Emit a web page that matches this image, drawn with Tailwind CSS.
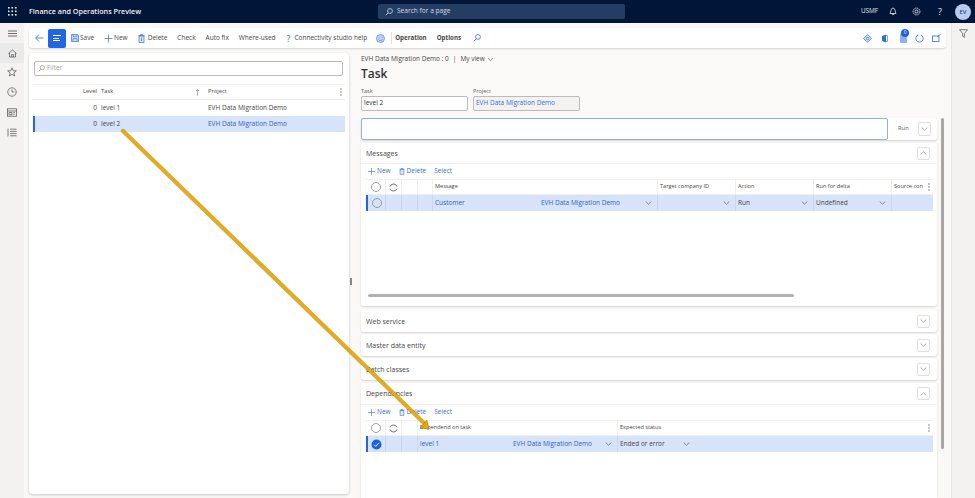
<!DOCTYPE html>
<html>
<head>
<meta charset="utf-8">
<script src="https://cdn.jsdelivr.net/npm/@tailwindcss/browser@4"></script>
</head>
<body class="m-0">
<div class="relative w-[975px] h-[498px] overflow-hidden flex flex-col bg-[#faf9f8] text-[#323130] font-['Open_Sans','Noto_Sans',sans-serif] text-[6.5px] leading-none">

  <!-- top bar -->
  <header class="h-[23px] shrink-0 bg-[#001537] text-white flex items-center relative">
    <div class="w-[24px] flex justify-center">
      <svg width="9" height="9" viewBox="0 0 9 9" fill="#e8edf5"><rect x="0" y="0" width="1.6" height="1.6"/><rect x="3.5" y="0" width="1.6" height="1.6"/><rect x="7" y="0" width="1.6" height="1.6"/><rect x="0" y="3.5" width="1.6" height="1.6"/><rect x="3.5" y="3.5" width="1.6" height="1.6"/><rect x="7" y="3.5" width="1.6" height="1.6"/><rect x="0" y="7" width="1.6" height="1.6"/><rect x="3.5" y="7" width="1.6" height="1.6"/><rect x="7" y="7" width="1.6" height="1.6"/></svg>
    </div>
    <span class="ml-[5px] text-[7.2px] font-semibold whitespace-nowrap text-[#eef1f6]">Finance and Operations Preview</span>
    <div class="absolute left-[378px] top-[4px] w-[247px] h-[15px] rounded-[2px] bg-[#243d63] flex items-center pl-[7px] gap-[4px]">
      <svg width="8" height="8" viewBox="0 0 8 8" fill="none" stroke="#d5dce8" stroke-width=".8"><circle cx="5" cy="3" r="2.4"/><path d="M3.2 4.8 L.8 7.2"/></svg>
      <span class="text-[6.6px] text-[#d5dce8]">Search for a page</span>
    </div>
    <div class="ml-auto flex items-center text-[#e8edf5]">
      <span class="text-[6.4px] mr-[11px]">USMF</span>
      <svg class="mr-[15px]" width="8" height="9" viewBox="0 0 8 9" fill="none" stroke="#e8edf5" stroke-width=".8"><path d="M1 6.5 C2 5.5 1.5 1 4 1 C6.5 1 6 5.5 7 6.5 Z"/><path d="M3 7.5 H5"/></svg>
      <svg class="mr-[17px]" width="9" height="9" viewBox="0 0 9 9" fill="none" stroke="#e8edf5" stroke-width=".9"><circle cx="4.5" cy="4.5" r="1.5"/><circle cx="4.5" cy="4.5" r="3.4" stroke-dasharray="1.4 .6"/></svg>
      <span class="text-[9px] mr-[13px]">?</span>
      <div class="w-[16px] h-[16px] rounded-full bg-[#b6cbf0] text-[#33486e] text-[6px] font-semibold flex items-center justify-center mr-[4px]">EV</div>
    </div>
  </header>

  <div class="flex-1 flex min-h-0">
    <!-- left nav -->
    <nav class="w-[24px] shrink-0 bg-[#f3f2f1] flex flex-col items-center pt-[7px]">
      <svg class="mb-[6px]" width="9" height="7" viewBox="0 0 9 7" stroke="#605e5c" stroke-width=".9"><path d="M0 1H9M0 3.5H9M0 6H9"/></svg>
      <div class="w-[24px] h-[20px] bg-[#eaeaea] flex items-center justify-center">
        <svg width="9" height="9" viewBox="0 0 9 9" fill="none" stroke="#605e5c" stroke-width=".8"><path d="M.5 4.5 L4.5 1 L8.5 4.5M1.5 4 V8 H7.5 V4M3.6 8 V5.5 H5.4 V8"/></svg>
      </div>
      <svg class="mt-[4px]" width="10" height="10" viewBox="0 0 10 10" fill="none" stroke="#605e5c" stroke-width=".8"><path d="M5 .8 L6.2 3.7 L9.3 3.9 L6.9 5.9 L7.7 9 L5 7.3 L2.3 9 L3.1 5.9 L.7 3.9 L3.8 3.7 Z"/></svg>
      <svg class="mt-[10px]" width="10" height="10" viewBox="0 0 10 10" fill="none" stroke="#605e5c" stroke-width=".8"><circle cx="5" cy="5" r="4.2"/><path d="M5 2.5 V5 H7.2"/></svg>
      <svg class="mt-[11px]" width="10" height="9" viewBox="0 0 10 9" fill="none" stroke="#605e5c" stroke-width=".8"><rect x=".5" y=".8" width="9" height="7.4"/><path d="M.5 3H9.5M2 4.6H5V6.8H2ZM6.4 4.6H8M6.4 6.2H8" /></svg>
      <svg class="mt-[11px]" width="10" height="9" viewBox="0 0 10 9" fill="none" stroke="#605e5c" stroke-width=".8"><path d="M1 .5V8.5M3 1.2H9.5M3 3.4H9.5M3 5.6H9.5M3 7.8H9.5"/></svg>
    </nav>

    <!-- main -->
    <main class="flex-1 min-w-0 flex flex-col pl-[5px] pt-[5px]">
      <!-- toolbar -->
      <div class="w-[917px] h-[20px] shrink-0 bg-white rounded-[3px] shadow-[0_1px_2px_rgba(0,0,0,.15)] flex items-center text-[#484644] whitespace-nowrap">
        <svg class="ml-[6px]" width="9" height="8" viewBox="0 0 9 8" fill="none" stroke="#2f6fdc" stroke-width=".8"><path d="M4 .5 L.7 4 L4 7.5M.7 4H8.6"/></svg>
        <div class="ml-[4px] w-[18px] h-[19px] bg-[#2266e3] rounded-[2px] flex flex-col justify-center gap-[1.5px] pl-[5px]">
          <i class="block w-[8px] h-px bg-white"></i><i class="block w-[6px] h-px bg-white"></i><i class="block w-[7px] h-px bg-white"></i>
        </div>
        <svg class="ml-[5px]" width="8" height="8" viewBox="0 0 8 8" fill="#dbe6f8" stroke="#2f6fdc" stroke-width=".7"><path d="M.5 .5H6.5L7.5 1.5V7.5H.5Z"/><path d="M2 .5V2.6H6V.5M2 7.5V4.6H6V7.5" fill="none"/></svg>
        <span class="ml-[1px]">Save</span>
        <svg class="ml-[10px]" width="9" height="9" viewBox="0 0 9 9" stroke="#2f6fdc" stroke-width=".7"><path d="M4.5 .5V8.5M.5 4.5H8.5"/></svg>
        <span class="ml-[1px]">New</span>
        <svg class="ml-[10px]" width="7" height="9" viewBox="0 0 7 9" fill="#dbe6f8" stroke="#2f6fdc" stroke-width=".7"><path d="M1 2V8.5H6V2ZM.3 1.5H6.7M2.5 1.5V.5H4.5V1.5M3.5 3.5V7"/></svg>
        <span class="ml-[3px]">Delete</span>
        <span class="ml-[10px]">Check</span>
        <span class="ml-[10px]">Auto fix</span>
        <span class="ml-[10px]">Where-used</span>
        <span class="ml-[11px] text-[9px] text-[#2f6fdc] leading-none">?</span>
        <span class="ml-[4px]">Connectivity studio help</span>
        <svg class="ml-[9px]" width="9" height="9" viewBox="0 0 9 9" fill="#c4d7f6" stroke="#2f6fdc" stroke-width=".6"><circle cx="4.5" cy="4.5" r="4"/><path d="M2.5 5.5 C3.5 6.8 5.5 6.8 6.5 5.5M2.5 3.4H3.4M5.6 3.4H6.5" fill="none"/></svg>
        <i class="ml-[6px] block w-px h-[12px] bg-[#e1dfdd]"></i>
        <span class="ml-[3px] font-bold text-[6.2px]">Operation</span>
        <span class="ml-[10px] font-bold text-[6.2px]">Options</span>
        <svg class="ml-[12px]" width="8" height="8" viewBox="0 0 8 8" fill="none" stroke="#2f6fdc" stroke-width=".8"><circle cx="5" cy="3" r="2.4"/><path d="M3.2 4.8 L.8 7.2"/></svg>
        <div class="ml-auto flex items-center mr-[5px] relative">
          <svg class="mr-[9px]" width="9" height="9" viewBox="0 0 9 9" fill="#e4edfb" stroke="#2f6fdc" stroke-width=".8"><path d="M4.5 .6 L8.4 4.5 L4.5 8.4 L.6 4.5 Z"/><circle cx="4.5" cy="4.5" r="1.3" fill="none"/></svg>
          <svg class="mr-[12px]" width="7" height="9" viewBox="0 0 7 9"><path d="M1 2 L5 .4 V8.6 L1 7Z" fill="#2f6fdc"/><path d="M5 1.5H6.5V7.5H5" fill="none" stroke="#2f6fdc" stroke-width=".6"/></svg>
          <div class="relative mr-[8px] w-[7px] h-[9px] bg-[#8db0ee] rounded-[1px]">
            <div class="absolute left-[1px] top-[-5px] w-[8px] h-[8px] rounded-full bg-[#1a62dd] text-white text-[4.5px] flex items-center justify-center">0</div>
          </div>
          <svg class="mr-[8px]" width="9" height="9" viewBox="0 0 9 9" fill="none" stroke="#2f6fdc" stroke-width=".8"><path d="M3 1 A3.7 3.7 0 1 0 6 1"/><path d="M3 .4V1.8H1.6" stroke-width=".5"/></svg>
          <svg width="9" height="8" viewBox="0 0 9 8" fill="none" stroke="#2f6fdc" stroke-width=".8"><rect x=".5" y="2" width="6.5" height="5.5"/><path d="M5.5 2.5L8.5 .5"/></svg>
        </div>
      </div>

      <!-- content -->
      <div class="flex flex-1 min-h-0 mt-[5px]">
        <!-- left list panel -->
        <section class="w-[320px] h-[441px] shrink-0 bg-white rounded-[4px] shadow-[0_1px_3px_rgba(0,0,0,.2)] pt-[8px] px-[5px]">
          <div class="h-[15px] w-[309px] border border-[#bdbbb9] rounded-[2px] flex items-center pl-[3px] gap-[2px] text-[#a19f9d]">
            <svg width="7" height="7" viewBox="0 0 8 8" fill="none" stroke="#8a8886" stroke-width=".8"><circle cx="5" cy="3" r="2.4"/><path d="M3.2 4.8 L.8 7.2"/></svg>
            <span>Filter</span>
          </div>
          <div class="mt-[8px] w-[312px] ml-[-1px] border-t border-[#f0efee]">
            <div class="h-[15px] flex items-center border-b border-[#edebe9] font-medium text-[5.8px] text-[#484644]">
              <span class="w-[64px] text-right">Level</span>
              <span class="ml-[4px] w-[94px]">Task</span>
              <svg class="mr-[8px]" width="5" height="7" viewBox="0 0 5 7" fill="none" stroke="#777" stroke-width=".6"><path d="M2.5 6.8V.5M1 2L2.5 .5L4 2"/></svg>
              <span class="w-[132px]">Project</span>
              <svg width="2" height="8" viewBox="0 0 2 8" fill="#605e5c"><circle cx="1" cy="1" r=".7"/><circle cx="1" cy="4" r=".7"/><circle cx="1" cy="7" r=".7"/></svg>
            </div>
            <div class="h-[16px] flex items-center text-[#484644]">
              <span class="w-[64px] text-right">0</span>
              <span class="ml-[4px] w-[107px]">level 1</span>
              <span>EVH Data Migration Demo</span>
            </div>
            <div class="h-[16px] flex items-center bg-[#d6e3f9] border-l-2 border-[#2266e3] text-[#484644]">
              <span class="w-[62px] text-right">0</span>
              <span class="ml-[4px] w-[107px]">level 2</span>
              <span class="text-[#2c62c4]">EVH Data Migration Demo</span>
            </div>
          </div>
        </section>

        <!-- splitter -->
        <div class="w-[12px] shrink-0 flex items-start justify-start pl-[1px] pt-[225px]">
          <i class="block w-[2px] h-[7px] border-x border-[#8a8886]"></i>
        </div>

        <!-- detail -->
        <section class="w-[576px] shrink-0 flex flex-col">
          <div class="mt-[3px] flex items-center text-[#484644] whitespace-nowrap">
            <span>EVH Data Migration Demo : 0</span><span class="mx-[4px]">|</span><span>My view</span>
            <svg class="ml-[2px]" width="7" height="5" viewBox="0 0 7 5" fill="none" stroke="#605e5c" stroke-width=".7"><path d="M1 1 L3.5 3.6 L6 1"/></svg>
          </div>
          <h1 class="mt-[5px] text-[12px] font-semibold text-[#323130]">Task</h1>
          <div class="mt-[9px] flex gap-[5px]">
            <div class="w-[107px]">
              <div class="text-[5.5px] text-[#605e5c] mb-[2px]">Task</div>
              <div class="h-[15px] bg-white border border-[#bdbbb9] rounded-[2px] flex items-center pl-[2px] text-[6.5px]">level 2</div>
            </div>
            <div class="w-[107px]">
              <div class="text-[5.5px] text-[#605e5c] mb-[2px]">Project</div>
              <div class="h-[15px] bg-[#f3f2f1] border border-[#bdbbb9] rounded-[2px] flex items-center pl-[2px] text-[#3a6fd0]">EVH Data Migration Demo</div>
            </div>
          </div>

          <!-- run bar -->
          <div class="mt-[7px] h-[22px] bg-white rounded-[3px] shadow-[0_1px_2px_rgba(0,0,0,.15)] flex items-center">
            <div class="w-[527px] h-[22px] border border-[#8fb0ee] rounded-[2px] bg-white"></div>
            <span class="ml-[10px] text-[#605e5c] text-[5.8px]">Run</span>
            <div class="ml-[9px] w-[13px] h-[14px] border border-[#e1dfdd] rounded-[2px] flex items-center justify-center">
              <svg width="7" height="4" viewBox="0 0 7 4" fill="none" stroke="#8a8886" stroke-width=".7"><path d="M.7 .5 L3.5 3.2 L6.3 .5"/></svg>
            </div>
          </div>

          <!-- Messages -->
          <div class="mt-[3px] h-[163px] bg-white rounded-[3px] shadow-[0_1px_2px_rgba(0,0,0,.15)] flex flex-col">
            <div class="h-[21px] shrink-0 flex items-center pl-[5px] pr-[7px] border-b border-[#f0efee]">
              <span class="text-[7px] font-medium text-[#484644]">Messages</span>
              <div class="ml-auto w-[13px] h-[13px] border border-[#e1dfdd] rounded-[2px] flex items-center justify-center">
                <svg width="7" height="4" viewBox="0 0 7 4" fill="none" stroke="#8a8886" stroke-width=".7"><path d="M.7 3.5 L3.5 .8 L6.3 3.5"/></svg>
              </div>
            </div>
            <div class="h-[15px] shrink-0 flex items-center pl-[7px] gap-[8px] text-[#3a6fd0]">
              <span class="flex items-center gap-[2px]"><svg width="7" height="7" viewBox="0 0 7 7" stroke="#2f6fdc" stroke-width=".6"><path d="M3.5 0V7M0 3.5H7"/></svg>New</span>
              <span class="flex items-center gap-[2px]"><svg width="6" height="7" viewBox="0 0 7 9" fill="#dbe6f8" stroke="#2f6fdc" stroke-width=".7"><path d="M1 2V8.5H6V2ZM.3 1.5H6.7M2.5 1.5V.5H4.5V1.5"/></svg>Delete</span>
              <span>Select</span>
            </div>
            <div class="ml-[5px] mr-[4px] flex flex-col flex-1 min-h-0 relative">
              <div class="h-[16px] shrink-0 border-t border-b border-[#f0efee] grid grid-cols-[19px_16px_16px_15px_225px_78px_78px_78px_1fr] items-center text-[5.6px] font-medium text-[#484644]">
                <div class="flex justify-center"><i class="block w-[10px] h-[10px] rounded-full border border-[#a19f9d]"></i></div>
                <div class="flex justify-center h-full items-center border-l border-[#f0efee]"><svg width="9" height="9" viewBox="0 0 9 9" fill="none" stroke="#484644" stroke-width=".8"><path d="M1 3.5 A3.7 3.7 0 0 1 8 3.5M8 5.5 A3.7 3.7 0 0 1 1 5.5"/></svg></div>
                <div class="h-full border-l border-[#f0efee]"></div>
                <div class="h-full border-l border-[#f0efee]"></div>
                <div class="h-full border-l border-[#f0efee] flex items-center pl-[2px]">Message</div>
                <div class="h-full border-l border-[#f0efee] flex items-center pl-[2px]">Target company ID</div>
                <div class="h-full border-l border-[#f0efee] flex items-center pl-[2px]">Action</div>
                <div class="h-full border-l border-[#f0efee] flex items-center pl-[2px]">Run for delta</div>
                <div class="h-full border-l border-[#f0efee] flex items-center pl-[2px] whitespace-nowrap overflow-hidden">Source con<svg class="ml-auto mr-[3px]" width="2" height="8" viewBox="0 0 2 8" fill="#605e5c"><circle cx="1" cy="1" r=".7"/><circle cx="1" cy="4" r=".7"/><circle cx="1" cy="7" r=".7"/></svg></div>
              </div>
              <div class="h-[16px] shrink-0 bg-[#d6e3f9] border-l-2 border-[#2266e3] grid grid-cols-[17px_16px_16px_15px_109px_116px_78px_78px_78px_1fr] items-center text-[#484644]">
                <div class="flex justify-center"><i class="block w-[10px] h-[10px] rounded-full border border-[#9b9a98]"></i></div>
                <div class="h-full border-l border-[#c9d6ec]"></div>
                <div class="h-full border-l border-[#c9d6ec]"></div>
                <div class="h-full border-l border-[#c9d6ec]"></div>
                <div class="h-full border-l border-[#c9d6ec] flex items-center pl-[2px] text-[#2c62c4]">Customer</div>
                <div class="flex items-center text-[#2c62c4]">EVH Data Migration Demo<svg class="ml-auto mr-[5px]" width="7" height="4" viewBox="0 0 7 4" fill="none" stroke="#605e5c" stroke-width=".7"><path d="M.7 .5 L3.5 3.2 L6.3 .5"/></svg></div>
                <div class="h-full border-l border-[#c9d6ec] flex items-center"><svg class="ml-auto mr-[5px]" width="7" height="4" viewBox="0 0 7 4" fill="none" stroke="#605e5c" stroke-width=".7"><path d="M.7 .5 L3.5 3.2 L6.3 .5"/></svg></div>
                <div class="h-full border-l border-[#c9d6ec] flex items-center pl-[2px]">Run<svg class="ml-auto mr-[5px]" width="7" height="4" viewBox="0 0 7 4" fill="none" stroke="#605e5c" stroke-width=".7"><path d="M.7 .5 L3.5 3.2 L6.3 .5"/></svg></div>
                <div class="h-full border-l border-[#c9d6ec] flex items-center pl-[2px]">Undefined<svg class="ml-auto mr-[5px]" width="7" height="4" viewBox="0 0 7 4" fill="none" stroke="#605e5c" stroke-width=".7"><path d="M.7 .5 L3.5 3.2 L6.3 .5"/></svg></div>
                <div class="h-full border-l border-[#c9d6ec]"></div>
              </div>
              <div class="mt-[83px] ml-[2px] w-[426px] h-[3px] rounded-full bg-[#b3b2b1]"></div>
            </div>
          </div>

          <!-- collapsed sections -->
          <div class="mt-[4px] h-[22px] bg-white rounded-[3px] shadow-[0_1px_2px_rgba(0,0,0,.15)] flex items-center pl-[5px] pr-[7px]">
            <span class="text-[7px] font-medium text-[#484644]">Web service</span>
            <div class="ml-auto w-[13px] h-[13px] border border-[#e1dfdd] rounded-[2px] flex items-center justify-center"><svg width="7" height="4" viewBox="0 0 7 4" fill="none" stroke="#8a8886" stroke-width=".7"><path d="M.7 .5 L3.5 3.2 L6.3 .5"/></svg></div>
          </div>
          <div class="mt-[2px] h-[22px] bg-white rounded-[3px] shadow-[0_1px_2px_rgba(0,0,0,.15)] flex items-center pl-[5px] pr-[7px]">
            <span class="text-[7px] font-medium text-[#484644]">Master data entity</span>
            <div class="ml-auto w-[13px] h-[13px] border border-[#e1dfdd] rounded-[2px] flex items-center justify-center"><svg width="7" height="4" viewBox="0 0 7 4" fill="none" stroke="#8a8886" stroke-width=".7"><path d="M.7 .5 L3.5 3.2 L6.3 .5"/></svg></div>
          </div>
          <div class="mt-[2px] h-[22px] bg-white rounded-[3px] shadow-[0_1px_2px_rgba(0,0,0,.15)] flex items-center pl-[5px] pr-[7px]">
            <span class="text-[7px] font-medium text-[#484644]">Batch classes</span>
            <div class="ml-auto w-[13px] h-[13px] border border-[#e1dfdd] rounded-[2px] flex items-center justify-center"><svg width="7" height="4" viewBox="0 0 7 4" fill="none" stroke="#8a8886" stroke-width=".7"><path d="M.7 .5 L3.5 3.2 L6.3 .5"/></svg></div>
          </div>

          <!-- Dependencies -->
          <div class="mt-[3px] flex-1 bg-white rounded-t-[3px] shadow-[0_1px_2px_rgba(0,0,0,.15)] flex flex-col">
            <div class="h-[22px] shrink-0 flex items-center pl-[5px] pr-[7px] border-b border-[#f0efee]">
              <span class="text-[7px] font-medium text-[#484644]">Dependencies</span>
              <div class="ml-auto w-[13px] h-[13px] border border-[#e1dfdd] rounded-[2px] flex items-center justify-center"><svg width="7" height="4" viewBox="0 0 7 4" fill="none" stroke="#8a8886" stroke-width=".7"><path d="M.7 3.5 L3.5 .8 L6.3 3.5"/></svg></div>
            </div>
            <div class="h-[15px] shrink-0 flex items-center pl-[7px] gap-[8px] text-[#3a6fd0]">
              <span class="flex items-center gap-[2px]"><svg width="7" height="7" viewBox="0 0 7 7" stroke="#2f6fdc" stroke-width=".6"><path d="M3.5 0V7M0 3.5H7"/></svg>New</span>
              <span class="flex items-center gap-[2px]"><svg width="6" height="7" viewBox="0 0 7 9" fill="#dbe6f8" stroke="#2f6fdc" stroke-width=".7"><path d="M1 2V8.5H6V2ZM.3 1.5H6.7M2.5 1.5V.5H4.5V1.5"/></svg>Delete</span>
              <span>Select</span>
            </div>
            <div class="ml-[5px] mr-[4px]">
              <div class="h-[16px] border-t border-b border-[#f0efee] grid grid-cols-[19px_16px_16px_200px_1fr] items-center text-[5.6px] font-medium text-[#484644]">
                <div class="flex justify-center"><i class="block w-[10px] h-[10px] rounded-full border border-[#a19f9d]"></i></div>
                <div class="flex justify-center h-full items-center border-l border-[#f0efee]"><svg width="9" height="9" viewBox="0 0 9 9" fill="none" stroke="#484644" stroke-width=".8"><path d="M1 3.5 A3.7 3.7 0 0 1 8 3.5M8 5.5 A3.7 3.7 0 0 1 1 5.5"/></svg></div>
                <div class="h-full border-l border-[#f0efee]"></div>
                <div class="h-full border-l border-[#f0efee] flex items-center pl-[2px]">Dependend on task</div>
                <div class="h-full border-l border-[#f0efee] flex items-center pl-[2px]">Expected status<svg class="ml-auto mr-[3px]" width="2" height="8" viewBox="0 0 2 8" fill="#605e5c"><circle cx="1" cy="1" r=".7"/><circle cx="1" cy="4" r=".7"/><circle cx="1" cy="7" r=".7"/></svg></div>
              </div>
              <div class="h-[16px] bg-[#d6e3f9] border-l-2 border-[#2266e3] grid grid-cols-[17px_16px_16px_96px_104px_78px_1fr] items-center text-[#484644]">
                <div class="flex justify-center"><svg width="11" height="11" viewBox="0 0 11 11"><circle cx="5.5" cy="5.5" r="5" fill="#1a62dd"/><path d="M3 5.6 L4.8 7.4 L8 3.8" fill="none" stroke="white" stroke-width=".9"/></svg></div>
                <div class="h-full border-l border-[#c9d6ec]"></div>
                <div class="h-full border-l border-[#c9d6ec]"></div>
                <div class="h-full border-l border-[#c9d6ec] flex items-center pl-[2px] text-[#2c62c4]">level 1</div>
                <div class="flex items-center text-[#2c62c4]">EVH Data Migration Demo<svg class="ml-auto mr-[5px]" width="7" height="4" viewBox="0 0 7 4" fill="none" stroke="#605e5c" stroke-width=".7"><path d="M.7 .5 L3.5 3.2 L6.3 .5"/></svg></div>
                <div class="h-full border-l border-[#c9d6ec] flex items-center pl-[2px]">Ended or error<svg class="ml-auto mr-[5px]" width="7" height="4" viewBox="0 0 7 4" fill="none" stroke="#605e5c" stroke-width=".7"><path d="M.7 .5 L3.5 3.2 L6.3 .5"/></svg></div>
                <div></div>
              </div>
            </div>
          </div>
        </section>

        <!-- page scrollbar -->
        <div class="ml-[4px] w-[3px] mt-[65px] h-[331px] bg-[#a8a7a6] rounded-full"></div>
      </div>
    </main>

    <!-- right rail -->
    <aside class="w-[24px] shrink-0 bg-[#f3f2f1] border-l border-[#e8e7e6] flex justify-center pt-[6px]">
      <svg width="9" height="9" viewBox="0 0 9 9" fill="none" stroke="#605e5c" stroke-width=".8"><path d="M.5 .7H8.5L5.4 4.5V8.3L3.6 7.2V4.5Z"/></svg>
    </aside>
  </div>

  <!-- annotation arrow -->
  <svg class="absolute left-0 top-0 pointer-events-none" width="975" height="498" viewBox="0 0 975 498" fill="none">
    <path d="M123 131 L424 423" stroke="#6b5200" stroke-opacity=".45" stroke-width="4.4" stroke-linecap="round"/>
    <path d="M123 131 L424 423" stroke="#efab00" stroke-width="3" stroke-linecap="round"/>
    <path d="M420 428 L429 429 L427 420 Z" fill="#e9a500" stroke="#6b5200" stroke-opacity=".6" stroke-width=".6"/>
  </svg>
</div>
</body>
</html>
